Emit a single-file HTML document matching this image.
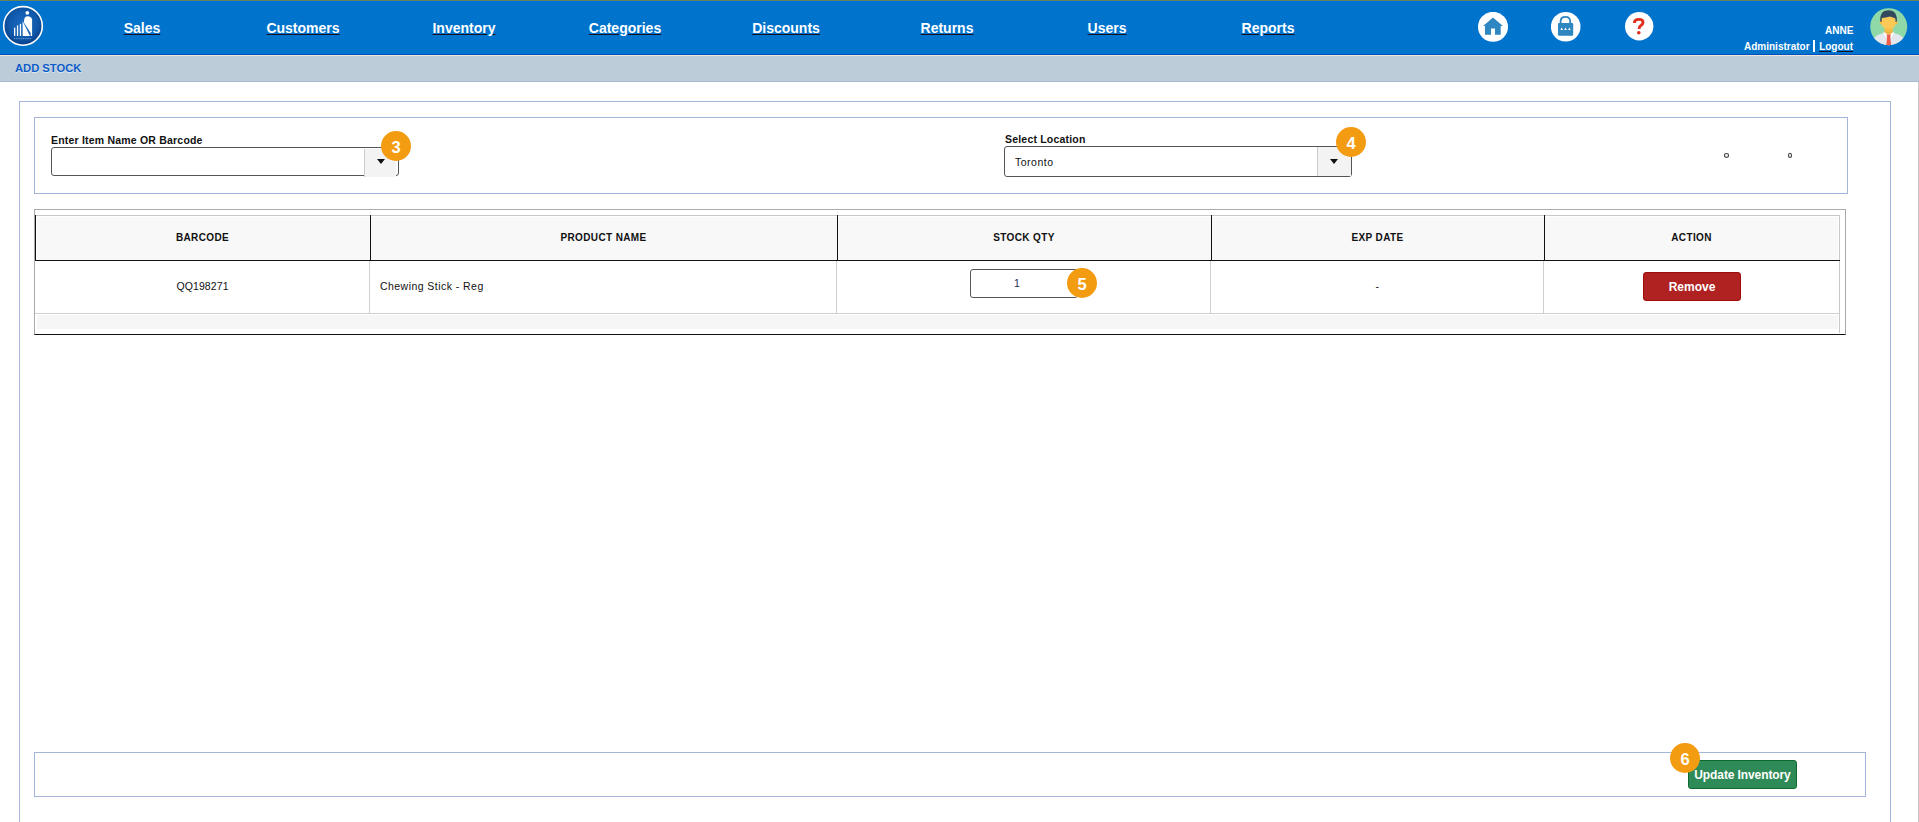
<!DOCTYPE html>
<html>
<head>
<meta charset="utf-8">
<style>
*{margin:0;padding:0;box-sizing:border-box;}
html,body{width:1919px;height:822px;overflow:hidden;background:#fff;font-family:"Liberation Sans",sans-serif;}
.abs{position:absolute;}
.t{position:absolute;white-space:nowrap;}
#topline{left:0;top:0;width:1919px;height:1px;background:#61854a;}
#nav{left:0;top:1px;width:1919px;height:54px;background:#0073cc;}
#nav .hl{position:absolute;left:0;top:0;width:1919px;height:1px;background:#006ee8;}
#nav .bl{position:absolute;left:0;top:53px;width:1919px;height:1px;background:#0052bf;}
.nl{position:absolute;top:20px;width:160px;text-align:center;font-size:14px;line-height:16px;font-weight:bold;color:#fff;}
.nl span{text-decoration:underline;text-decoration-color:#1a1020;text-underline-offset:1px;}
#cream{left:0;top:55px;width:1919px;height:1px;background:#efe3da;}
#sub{left:0;top:56px;width:1919px;height:26px;background:#bdccd9;border-bottom:1px solid #a9bbd0;}
#subt{left:15px;top:62px;font-size:11.2px;line-height:13px;font-weight:bold;color:#0a5cc6;text-shadow:0 1px 0 rgba(255,255,255,0.55);}
#sb{left:1918px;top:82px;width:1px;height:740px;background:#c8c8c8;}
.panel{position:absolute;border:1px solid #a3b5d8;}
.lbl{position:absolute;font-size:10.5px;line-height:12px;font-weight:bold;color:#111;letter-spacing:0.2px;}
.inp{position:absolute;border:1px solid #555;border-radius:3px;background:#fff;}
.dd{position:absolute;background:#f3f3f3;border-left:1px solid #ccc;}
.tri{position:absolute;width:0;height:0;border-left:4.5px solid transparent;border-right:4.5px solid transparent;border-top:5px solid #111;}
.badge{position:absolute;width:30px;height:30px;border-radius:50%;background:#f39c12;color:#fff;font-weight:bold;font-size:16.5px;line-height:33px;text-align:center;}
.th{position:absolute;top:217px;height:43px;background:#f8f8f8;}
.htxt{position:absolute;top:232px;font-size:10px;line-height:12px;font-weight:bold;color:#111;text-align:center;letter-spacing:0.38px;}
.vd{position:absolute;top:215px;width:1px;height:46px;background:#111;}
.vl{position:absolute;top:261px;width:1px;height:52px;background:#cfcfcf;}
.ctxt{position:absolute;top:280px;font-size:10.5px;line-height:12px;color:#111;letter-spacing:0.45px;}
</style>
</head>
<body>
<div id="topline" class="abs"></div>
<div id="nav" class="abs">
  <div class="hl"></div>
  <div class="bl"></div>
</div>
<!-- logo -->
<svg class="abs" style="left:0;top:2px" width="48" height="48" viewBox="0 0 48 48">
  <defs>
    <radialGradient id="lg" cx="50%" cy="45%" r="55%">
      <stop offset="0" stop-color="#1a6cc4"/>
      <stop offset="0.7" stop-color="#0f57a8"/>
      <stop offset="1" stop-color="#0a3d84"/>
    </radialGradient>
  </defs>
  <circle cx="23" cy="23.9" r="19.3" fill="url(#lg)" stroke="#fff" stroke-width="1.6"/>
  <rect x="14" y="25.7" width="1.3" height="8.2" fill="#fff"/>
  <rect x="16.9" y="23.4" width="1.3" height="10.5" fill="#fff"/>
  <rect x="19.8" y="21.9" width="1.3" height="12" fill="#fff"/>
  <circle cx="27.3" cy="10.8" r="1.9" fill="#fff"/>
  <path d="M22.6 19 L22.6 33.9 L30 33.9 Z" fill="#fff"/>
  <path d="M24.2 17.5 Q25 14.3 27.3 14.3 Q31.2 14.3 32.1 17.2 L32.1 33.9 L30.6 33.9 L30.6 31 L23.9 20.4 Z" fill="#fff"/>
  <line x1="14" y1="36.6" x2="32" y2="36.6" stroke="#8fb4e6" stroke-width="1" stroke-dasharray="1 0.8" opacity="0.8"/>
</svg>
<div class="nl" style="left:62px"><span>Sales</span></div>
<div class="nl" style="left:223px"><span>Customers</span></div>
<div class="nl" style="left:384px"><span>Inventory</span></div>
<div class="nl" style="left:545px"><span>Categories</span></div>
<div class="nl" style="left:706px"><span>Discounts</span></div>
<div class="nl" style="left:867px"><span>Returns</span></div>
<div class="nl" style="left:1027px"><span>Users</span></div>
<div class="nl" style="left:1188px"><span>Reports</span></div>

<!-- icons -->
<svg class="abs" style="left:1478px;top:12px" width="30" height="30" viewBox="0 0 30 30">
  <circle cx="15" cy="14.8" r="15" fill="#fff"/>
  <path d="M15 5.6 L24.9 14.1 L22.7 14.1 L22.7 22.8 L17 22.8 L17 16.5 L13 16.5 L13 22.8 L7 22.8 L7 14.1 L5.1 14.1 Z" fill="#2f87c2"/>
</svg>
<svg class="abs" style="left:1551px;top:12px" width="30" height="30" viewBox="0 0 30 30">
  <circle cx="14.7" cy="14.8" r="14.8" fill="#fff"/>
  <path d="M9.6 11.5 L9.6 9.5 Q9.6 4.8 14.4 4.8 Q19.2 4.8 19.2 9.5 L19.2 11.5" fill="none" stroke="#2f87c2" stroke-width="1.8"/>
  <rect x="7" y="11" width="15.2" height="12.8" rx="1" fill="#2f87c2"/>
  <path d="M9.4 18 L10.7 15.6 L12 18 Z M13.2 18 L14.5 15.6 L15.8 18 Z M17.1 18 L18.4 15.6 L19.7 18 Z" fill="#fff"/>
</svg>
<svg class="abs" style="left:1625px;top:12px" width="29" height="29" viewBox="0 0 29 29">
  <circle cx="14.2" cy="14.2" r="14.2" fill="#fff"/>
  <path d="M9.4 11 Q9.4 7.4 14 7.4 Q18 7.4 18 10.2 Q18 12.1 16.1 13.3 Q14.1 14.5 14.1 17" fill="none" stroke="#e0301e" stroke-width="2.9" stroke-linecap="butt"/>
  <circle cx="13.8" cy="20.8" r="1.8" fill="#e0301e"/>
</svg>

<div class="t" style="left:1825px;top:25px;font-size:10px;line-height:12px;font-weight:bold;color:#fff;">ANNE</div>
<div class="t" style="left:1744px;top:40px;font-size:10px;line-height:12px;font-weight:bold;color:#fff;">Administrator <span style="display:inline-block;width:2px;height:12px;background:#fff;vertical-align:-2px;margin:0 1px"></span> <span style="text-decoration:underline;text-decoration-color:#1a1020">Logout</span></div>
<!-- avatar -->
<svg class="abs" style="left:1870px;top:8px" width="38" height="38" viewBox="0 0 38 38">
  <defs><clipPath id="ac"><circle cx="18.7" cy="18.7" r="18.5"/></clipPath></defs>
  <circle cx="18.7" cy="18.7" r="18.5" fill="#8fd9a8"/>
  <g clip-path="url(#ac)">
    <path d="M3 38 L4 30 Q8 25.5 18.7 24 Q29.5 25.5 33.5 30 L35 38 Z" fill="#e4e7ee"/>
    <rect x="14.6" y="19" width="8" height="7" fill="#f5bd45"/>
    <path d="M14.6 22.5 Q18.7 26 22.6 22.5 L22.6 25 Q18.7 27.5 14.6 25 Z" fill="#e9ab3a" opacity="0.6"/>
    <path d="M13 23.6 L18.7 27 L15.6 29.2 Z" fill="#fff"/>
    <path d="M24.4 23.6 L18.7 27 L21.8 29.2 Z" fill="#fff"/>
    <path d="M16.4 26.6 L21 26.6 L20.2 29 L21.2 38 L16.2 38 L17.2 29 Z" fill="#ef5b47"/>
  </g>
  <ellipse cx="11.2" cy="14.5" rx="1.5" ry="2" fill="#f5bd45"/>
  <ellipse cx="26.2" cy="14.5" rx="1.5" ry="2" fill="#f5bd45"/>
  <path d="M11.6 12 Q11.6 8.5 18.6 8.5 Q25.6 8.5 25.6 12 L25.6 15 Q25.6 20.8 18.6 20.8 Q11.6 20.8 11.6 15 Z" fill="#fcc957"/>
  <path d="M10.2 13.5 Q9.6 2.2 18.6 2.2 Q27.4 2.2 26.9 13.5 L25.6 14 L25.4 10.5 Q22 9.2 20 8.6 Q16 9.8 11.8 10 L11.6 14 Z" fill="#34495e"/>
</svg>
<div id="cream" class="abs"></div>
<div id="sub" class="abs"></div>
<div id="subt" class="t">ADD STOCK</div>
<div id="sb" class="abs"></div>

<!-- outer container -->
<div class="panel" style="left:19px;top:101px;width:1872px;height:740px;"></div>
<!-- search panel -->
<div class="panel" style="left:34px;top:117px;width:1814px;height:77px;"></div>
<div class="lbl" style="left:51px;top:134px;">Enter Item Name OR Barcode</div>
<div class="inp" style="left:51px;top:147px;width:348px;height:29px;"></div>
<div class="dd" style="left:364px;top:149px;width:32px;height:28px;"></div>
<div class="tri" style="left:376.5px;top:159px;"></div>
<div class="badge" style="left:381px;top:131px;">3</div>

<div class="lbl" style="left:1005px;top:133px;">Select Location</div>
<div class="inp" style="left:1004px;top:146px;width:348px;height:31px;"></div>
<div class="t" style="left:1015px;top:156px;font-size:10.5px;line-height:12px;color:#111;letter-spacing:0.5px;">Toronto</div>
<div class="dd" style="left:1317px;top:147px;width:34px;height:29px;"></div>
<div class="tri" style="left:1329.5px;top:159px;"></div>
<div class="badge" style="left:1336px;top:127px;">4</div>

<svg class="abs" style="left:1720px;top:150px" width="76" height="12" viewBox="0 0 76 12"><ellipse cx="6.5" cy="5.4" rx="2" ry="1.9" fill="none" stroke="#444" stroke-width="1.1"/><ellipse cx="70" cy="5.4" rx="1.55" ry="2" fill="none" stroke="#444" stroke-width="1.1"/></svg>

<!-- table -->
<div class="abs" style="left:34px;top:209px;width:1812px;height:126px;border:1px solid #aaa;border-bottom:1px solid #111;"></div>
<div class="abs" style="left:35px;top:215px;width:1805px;height:1px;background:#c8c8c8;"></div>
<div class="abs" style="left:1839px;top:215px;width:1px;height:118px;background:#c8c8c8;"></div>
<div class="th" style="left:37px;width:1801px;"></div>
<div class="abs" style="left:35px;top:260px;width:1805px;height:1px;background:#111;"></div>
<div class="vd" style="left:35px;"></div>
<div class="vd" style="left:370px;"></div>
<div class="vd" style="left:837px;"></div>
<div class="vd" style="left:1211px;"></div>
<div class="vd" style="left:1544px;"></div>
<div class="htxt" style="left:35px;width:335px;">BARCODE</div>
<div class="htxt" style="left:370px;width:467px;">PRODUCT NAME</div>
<div class="htxt" style="left:837px;width:374px;">STOCK QTY</div>
<div class="htxt" style="left:1211px;width:333px;">EXP DATE</div>
<div class="htxt" style="left:1544px;width:295px;">ACTION</div>
<div class="vl" style="left:369px;"></div>
<div class="vl" style="left:836px;"></div>
<div class="vl" style="left:1210px;"></div>
<div class="vl" style="left:1543px;"></div>
<div class="abs" style="left:35px;top:313px;width:1805px;height:1px;background:#cfcfcf;"></div>
<div class="abs" style="left:37px;top:315px;width:1801px;height:14px;background:#f6f6f6;"></div>
<div class="ctxt" style="left:35px;width:335px;text-align:center;letter-spacing:0.1px">QQ198271</div>
<div class="ctxt" style="left:380px;">Chewing Stick - Reg</div>
<div class="inp" style="left:970px;top:269px;width:108px;height:29px;"></div>
<div class="t" style="left:971px;width:92px;top:277px;font-size:10.5px;line-height:12px;color:#1b2a55;text-align:center;">1</div>
<div class="badge" style="left:1067px;top:268px;">5</div>
<div class="ctxt" style="left:1211px;width:333px;text-align:center;">-</div>
<div class="abs" style="left:1643px;top:272px;width:98px;height:29px;background:#b02222;border:1px solid #a00c0c;border-radius:3px;color:#fff;font-weight:bold;font-size:12px;line-height:28px;text-align:center;">Remove</div>

<!-- footer panel -->
<div class="panel" style="left:34px;top:752px;width:1832px;height:45px;"></div>
<div class="abs" style="left:1688px;top:760px;width:109px;height:29px;background:#2e8b57;border:1px solid #0f6a30;border-radius:3px;color:#fff;font-weight:bold;font-size:12px;line-height:28px;text-align:center;letter-spacing:-0.1px;">Update Inventory</div>
<div class="badge" style="left:1670px;top:743px;">6</div>
</body>
</html>
